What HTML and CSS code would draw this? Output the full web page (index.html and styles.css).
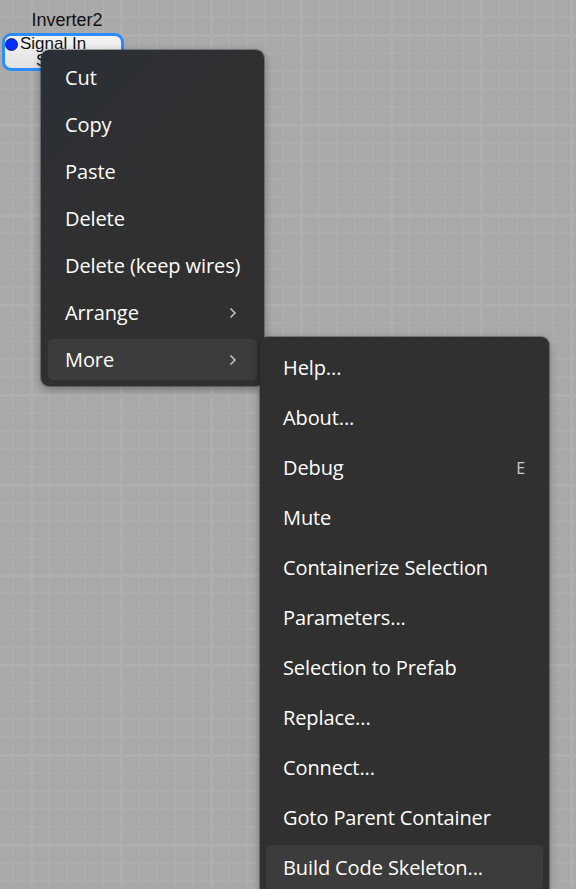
FILE: index.html
```html
<!DOCTYPE html>
<html>
<head>
<meta charset="utf-8">
<link rel="stylesheet" href="styles.css">
</head>
<body>
<div class="canvas">
  <div class="node">
    <div class="node-title">Inverter2</div>
    <div class="node-box">
      <div class="port"><span class="dot"></span><span>Signal In</span></div>
      <div class="node-line2">Signal Out</div>
    </div>
  </div>

  <div class="menu menu-main">
    <div class="item">Cut</div>
    <div class="item">Copy</div>
    <div class="item">Paste</div>
    <div class="item">Delete</div>
    <div class="item">Delete (keep wires)</div>
    <div class="item">Arrange<svg class="chev" width="8" height="12" viewBox="0 0 8 12"><polyline points="1.5,1.5 6,6 1.5,10.5" /></svg></div>
    <div class="item active">More<svg class="chev" width="8" height="12" viewBox="0 0 8 12"><polyline points="1.5,1.5 6,6 1.5,10.5" /></svg></div>
  </div>

  <div class="menu menu-sub">
    <div class="item">Help...</div>
    <div class="item">About...</div>
    <div class="item">Debug<span class="key">E</span></div>
    <div class="item">Mute</div>
    <div class="item">Containerize Selection</div>
    <div class="item">Parameters...</div>
    <div class="item">Selection to Prefab</div>
    <div class="item">Replace...</div>
    <div class="item">Connect...</div>
    <div class="item">Goto Parent Container</div>
    <div class="item active">Build Code Skeleton...</div>
  </div>
</div>
</body>
</html>
```

FILE: styles.css
```css
html, body {
  margin: 0;
  padding: 0;
  width: 576px;
  height: 889px;
  overflow: hidden;
}

.canvas {
  position: relative;
  width: 576px;
  height: 889px;
  overflow: hidden;
  background-color: #a9a9a9;
  background-image:
    linear-gradient(to right, #afafaf 3px, transparent 3px),
    linear-gradient(to bottom, #afafaf 3px, transparent 3px),
    linear-gradient(to right, #adadad 2px, transparent 2px),
    linear-gradient(to bottom, #adadad 2px, transparent 2px);
  background-size: 90px 90px, 90px 90px, 18px 18px, 18px 18px;
  background-position: 30px 0, 0 34px, 12px 0, 0 16px;
  font-family: "Liberation Sans", Arial, sans-serif;
}

.node {
  position: absolute;
  left: 2px;
  top: 10px;
  width: 122px;
}

.node-title {
  font-size: 18px;
  color: #111;
  text-align: center;
  padding-left: 8px;
  line-height: 21px;
  height: 22px;
}

.node-box {
  margin-top: 1px;
  height: 32px;
  border: 3px solid #2b8cff;
  border-radius: 9px;
  background: linear-gradient(#f4f4f4, #e2e2e2);
  overflow: hidden;
  font-size: 17px;
  color: #111;
  line-height: 16px;
  white-space: nowrap;
}

.port {
  display: flex;
  align-items: center;
  gap: 3px;
  padding-left: 1px;
  height: 16px;
}

.dot {
  width: 11px;
  height: 11px;
  border-radius: 50%;
  background: #0a2dff;
  box-shadow: 0 0 0 1px #142a7a;
  flex: none;
}

.node-line2 {
  padding-left: 31px;
  margin-top: 1px;
}

.menu {
  position: absolute;
  display: flex;
  flex-direction: column;
  gap: 6px;
  border-radius: 8px;
  font-family: "Open Sans", "Noto Sans", sans-serif;
  font-size: 20px;
  letter-spacing: -0.1px;
  color: #ffffff;
  box-shadow: 0 0 0 1px rgba(40, 40, 40, 0.35), 0 3px 10px rgba(0, 0, 0, 0.35);
  box-sizing: border-box;
  white-space: nowrap;
}

.menu-main {
  left: 41px;
  top: 50px;
  width: 223px;
  height: 336px;
  padding: 7px 7px 6px 7px;
  background: linear-gradient(135deg, #292e36 0%, #2e3034 25%, #303030 50%, #303030 100%);
}

.menu-sub {
  left: 260px;
  top: 337px;
  width: 289px;
  height: 552px;
  padding: 8px 6px 0 6px;
  gap: 5px;
  background: #303030;
  border-bottom-left-radius: 0;
  border-bottom-right-radius: 0;
}

.item {
  display: flex;
  align-items: center;
  justify-content: space-between;
  height: 41px;
  padding: 0 18px 0 17px;
  border-radius: 5px;
  flex: none;
}

.menu-sub .item {
  height: 45px;
}

.item.active {
  background: #3c3c3c;
}

.chev {
  fill: none;
  stroke: #c4c4c4;
  stroke-width: 1.5;
  margin-right: 2px;
  flex: none;
}

.key {
  font-size: 16px;
  color: #c8c8c8;
}
```
